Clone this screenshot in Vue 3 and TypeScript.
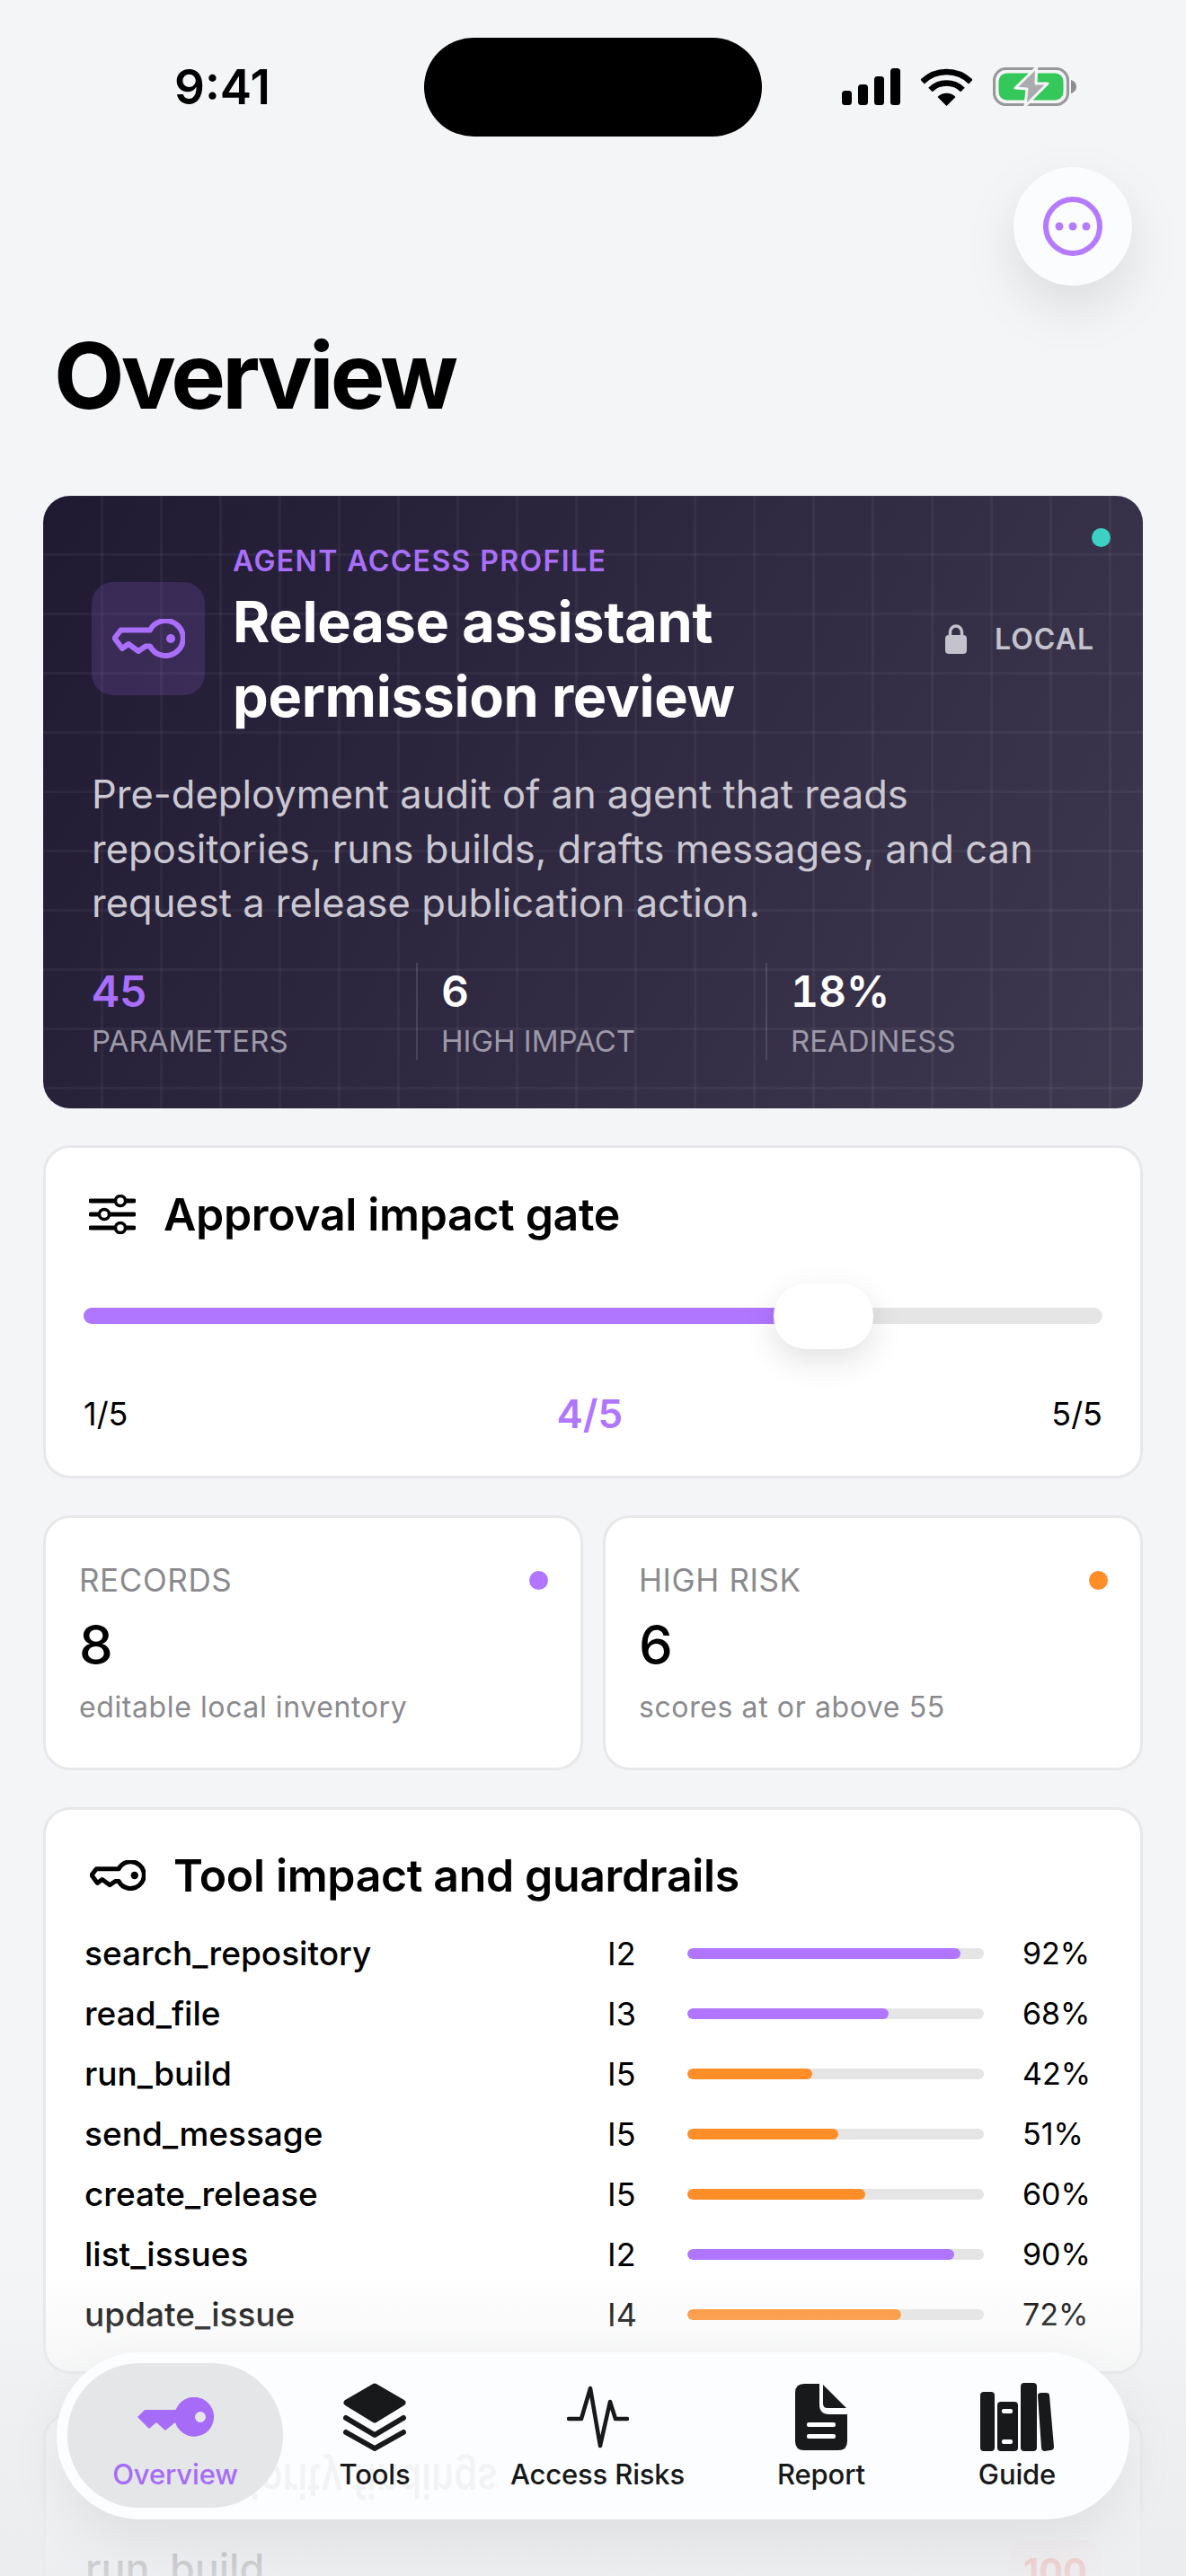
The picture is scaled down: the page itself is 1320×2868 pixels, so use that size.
<script setup lang="ts">
interface HeroStat {
  value: string;
  label: string;
  accent?: boolean;
}

interface ToolRow {
  name: string;
  impact: number;
  guard: number;
}

const heroStats: HeroStat[] = [
  { value: '45', label: 'PARAMETERS', accent: true },
  { value: '6', label: 'HIGH IMPACT' },
  { value: '18%', label: 'READINESS' },
];

const gatePercent = 72.6;

const summaries = [
  { label: 'RECORDS', value: '8', note: 'editable local inventory', tone: 'purple' },
  { label: 'HIGH RISK', value: '6', note: 'scores at or above 55', tone: 'orange' },
];

const tools: ToolRow[] = [
  { name: 'search_repository', impact: 2, guard: 92 },
  { name: 'read_file', impact: 3, guard: 68 },
  { name: 'run_build', impact: 5, guard: 42 },
  { name: 'send_message', impact: 5, guard: 51 },
  { name: 'create_release', impact: 5, guard: 60 },
  { name: 'list_issues', impact: 2, guard: 90 },
  { name: 'update_issue', impact: 4, guard: 72 },
];
</script>

<template>
  <div class="screen">
    <div class="status">
      <span class="time">9:41</span>
      <div class="status-icons">
        <svg width="65" height="41" viewBox="0 0 65 41" fill="#000">
          <rect x="0" y="25" width="11" height="16" rx="3.5" />
          <rect x="18" y="18" width="11" height="23" rx="3.5" />
          <rect x="36" y="9" width="11" height="32" rx="3.5" />
          <rect x="54" y="0" width="11" height="41" rx="3.5" />
        </svg>
        <svg width="57" height="42" viewBox="0 0 57 42">
          <path d="M1.6 15.1A38 38 0 0 1 55.4 15.1" fill="none" stroke="#000" stroke-width="6.5" />
          <path d="M10.5 24A25.5 25.5 0 0 1 46.5 24" fill="none" stroke="#000" stroke-width="6.5" />
          <path d="M28.5 42L18.5 32A14 14 0 0 1 38.5 32Z" fill="#000" />
        </svg>
        <svg width="93" height="43" viewBox="0 0 93 43">
          <rect x="1.5" y="1.5" width="82" height="40" rx="13" fill="none" stroke="#98989b" stroke-width="3.2" />
          <rect x="6.5" y="6.5" width="72" height="30" rx="9" fill="#34c759" />
          <path d="M87 14c3.500 1 6 4 6 7.500s-2.500 6.500-6 7.500Z" fill="#8e8e91" />
          <path d="M48.700 0L25 23L38 24L36 43L61 18L48 18Z" fill="#aaabad" stroke="#f4f5f7" stroke-width="3" stroke-linejoin="round" />
        </svg>
      </div>
    </div>
    <div class="island"></div>

    <div class="top-action">
      <button class="more-btn" type="button">
        <svg width="66" height="66" viewBox="0 0 66 66" fill="#b57bff">
          <circle cx="33" cy="33" r="30" fill="none" stroke="#b57bff" stroke-width="6" />
          <circle cx="18" cy="33" r="4.500" />
          <circle cx="33" cy="33" r="4.500" />
          <circle cx="48" cy="33" r="4.500" />
        </svg>
      </button>
    </div>

    <h1 class="page-title">Overview</h1>

    <main class="content">
      <section class="hero">
        <span class="hero-dot"></span>
        <div class="hero-head">
          <div class="hero-icon">
            <svg width="81" height="44" viewBox="0 0 81 44" fill="none" stroke="#a96ffa" stroke-width="6" stroke-linejoin="round">
              <path d="M42 12.500H9.500L2.500 21.500L11 33L18 28L29 36L37 30.500H42A19.500 19.500 0 1 0 42 12.500Z" />
              <circle cx="65" cy="22" r="5" fill="#a96ffa" stroke="none" />
            </svg>
          </div>
          <div class="hero-text">
            <div class="eyebrow">AGENT ACCESS PROFILE</div>
            <h2 class="hero-title">Release assistant<br />permission review</h2>
          </div>
          <div class="local">
            <svg width="24" height="33" viewBox="0 0 24 33" fill="#c4c2cc">
              <path d="M5.500 14V8.500a6.500 6.500 0 0 1 13 0V14" fill="none" stroke="#c4c2cc" stroke-width="3.500" />
              <rect x="0" y="12" width="24" height="21" rx="4" />
            </svg>
            <span>LOCAL</span>
          </div>
        </div>
        <p class="hero-desc">
          Pre-deployment audit of an agent that reads repositories, runs builds, drafts messages, and can request a release publication action.
        </p>
        <div class="hero-stats">
          <div v-for="stat in heroStats" :key="stat.label" class="hero-stat">
            <div class="hero-num" :class="{ accent: stat.accent }">{{ stat.value }}</div>
            <div class="hero-label">{{ stat.label }}</div>
          </div>
        </div>
      </section>

      <section class="card gate">
        <div class="card-head">
          <svg width="52" height="44" viewBox="0 0 52 44" fill="none" stroke="#000" stroke-linecap="round">
            <path d="M2 7H50M2 22H50M2 37H50" stroke-width="5" />
            <circle cx="35" cy="7" r="5.500" fill="#fff" stroke-width="3.500" />
            <circle cx="17" cy="22" r="5.500" fill="#fff" stroke-width="3.500" />
            <circle cx="35" cy="37" r="5.500" fill="#fff" stroke-width="3.500" />
          </svg>
          <h3>Approval impact gate</h3>
        </div>
        <div class="slider">
          <div class="track">
            <div class="track-fill" :style="{ width: gatePercent + '%' }"></div>
          </div>
          <div class="thumb" :style="{ left: gatePercent + '%' }"></div>
        </div>
        <div class="slider-labels">
          <span>1/5</span>
          <strong>4/5</strong>
          <span>5/5</span>
        </div>
      </section>

      <div class="summary-grid">
        <section v-for="item in summaries" :key="item.label" class="card summary">
          <div class="summary-top">
            <span class="summary-label">{{ item.label }}</span>
            <i class="summary-dot" :class="item.tone"></i>
          </div>
          <div class="summary-value">{{ item.value }}</div>
          <div class="summary-note">{{ item.note }}</div>
        </section>
      </div>

      <section class="card tools">
        <div class="card-head">
          <svg width="62" height="34" viewBox="0 0 81 44" fill="none" stroke="#000" stroke-width="6.500" stroke-linejoin="round">
            <path d="M42 12.500H9.500L2.500 21.500L11 33L18 28L29 36L37 30.500H42A19.500 19.500 0 1 0 42 12.500Z" />
            <circle cx="65" cy="22" r="5.500" fill="#000" stroke="none" />
          </svg>
          <h3>Tool impact and guardrails</h3>
        </div>
        <div class="tool-list">
          <div v-for="tool in tools" :key="tool.name" class="tool-row">
            <span class="tool-name">{{ tool.name }}</span>
            <span class="tool-impact">I{{ tool.impact }}</span>
            <div class="bar">
              <div class="bar-fill" :class="tool.impact >= 4 ? 'orange' : 'purple'" :style="{ width: tool.guard + '%' }"></div>
            </div>
            <span class="tool-pct">{{ tool.guard }}%</span>
          </div>
        </div>
      </section>

      <section class="card findings">
        <div class="card-head">
          <h3>Priority findings</h3>
        </div>
        <div class="finding-row">
          <span class="finding-name">run_build</span>
          <span class="finding-score">100</span>
        </div>
      </section>
    </main>

    <div class="fade"></div>

    <nav class="tabbar">
      <span class="lens-text">Priority findings</span>
      <div class="tab active">
        <div class="tab-icon">
          <svg width="85" height="44" viewBox="0 0 85 44" fill="#a66cf8">
            <path fill-rule="evenodd" d="M0 22L8 14H42.500A22 22 0 1 1 42 28L31 37L21 28L13 35ZM70 16a6 6 0 1 0 0 12a6 6 0 1 0 0-12Z" />
          </svg>
        </div>
        <span>Overview</span>
      </div>
      <div class="tab">
        <div class="tab-icon">
          <svg width="70" height="76" viewBox="0 0 70 76" fill="none" stroke="#17191a" stroke-linejoin="round" stroke-linecap="round">
            <path d="M35 4L66 22L35 41L4 22Z" fill="#17191a" stroke-width="7" />
            <path d="M3 39L35 58L67 39" stroke-width="6" />
            <path d="M3 55L35 73L67 55" stroke-width="6" />
          </svg>
        </div>
        <span>Tools</span>
      </div>
      <div class="tab">
        <div class="tab-icon">
          <svg width="69" height="70" viewBox="0 0 69 70" fill="none" stroke="#17191a" stroke-width="4.500" stroke-linecap="round" stroke-linejoin="round">
            <path d="M2 37H16L26 3L37 67L48 18L54 37H67" />
          </svg>
        </div>
        <span>Access Risks</span>
      </div>
      <div class="tab">
        <div class="tab-icon">
          <svg width="58" height="74" viewBox="0 0 58 74" fill="#17191a">
            <path d="M10 0H27V23Q27 34 38 34H58V64Q58 74 48 74H10Q0 74 0 64V10Q0 0 10 0Z" />
            <path d="M31 1L57 27H36Q31 27 31 22Z" />
            <rect x="13" y="43" width="32" height="5" rx="2" fill="#fdfeff" />
            <rect x="13" y="56" width="32" height="5" rx="2" fill="#fdfeff" />
          </svg>
        </div>
        <span>Report</span>
      </div>
      <div class="tab">
        <div class="tab-icon">
          <svg width="82" height="76" viewBox="0 0 82 76" fill="#17191a">
            <rect x="0" y="10" width="16" height="66" rx="4" />
            <rect x="19" y="21" width="23" height="55" rx="4" />
            <rect x="45" y="0" width="18" height="76" rx="4" />
            <path d="M64 14Q64 11 68 11L73 11Q77 11 77 14L82 71Q82 75 78 75L72 76Q68 76 68 72Z" />
            <rect x="24" y="29" width="12" height="5" rx="2" fill="#fdfeff" />
            <rect x="24" y="63" width="12" height="5" rx="2" fill="#fdfeff" />
          </svg>
        </div>
        <span>Guide</span>
      </div>
    </nav>
  </div>
</template>

<style scoped>
.screen {
  position: relative;
  width: 1320px;
  height: 2868px;
  overflow: hidden;
  background: #f4f5f7;
  font-family: Inter, "Liberation Sans", sans-serif;
  color: #000;
}

.status {
  display: flex;
  justify-content: space-between;
  align-items: flex-start;
  height: 186px;
  padding: 75px 122px 0 194px;
  box-sizing: border-box;
}

.time {
  font-size: 53px;
  line-height: 44px;
  font-weight: 600;
}

.status-icons {
  display: flex;
  align-items: center;
  gap: 23px;
}

.island {
  position: absolute;
  left: 472px;
  top: 42px;
  width: 376px;
  height: 110px;
  border-radius: 55px;
  background: #000;
}

.top-action {
  display: flex;
  justify-content: flex-end;
  padding-right: 60px;
}

.more-btn {
  display: flex;
  align-items: center;
  justify-content: center;
  width: 132px;
  height: 132px;
  padding: 0;
  border: 0;
  border-radius: 50%;
  background: #fbfcfe;
  box-shadow: 0 24px 60px rgba(0, 0, 0, 0.1);
}

.page-title {
  margin: 40px 0 74px 60px;
  font-size: 102px;
  line-height: 120px;
  font-weight: 700;
  letter-spacing: -3.8px;
}

.content {
  display: flex;
  flex-direction: column;
  gap: 41px;
  padding: 0 48px;
}

.hero {
  position: relative;
  height: 682px;
  box-sizing: border-box;
  padding: 53px 54px 0 54px;
  border-radius: 30px;
  color: #fff;
  background-color: #2d2740;
  background-image:
    linear-gradient(to right, rgba(255, 255, 255, 0.045) 3px, transparent 3px),
    linear-gradient(to bottom, rgba(255, 255, 255, 0.045) 3px, transparent 3px),
    linear-gradient(120deg, #1f1932 0%, #3f3950 100%);
  background-size: 66px 66px, 66px 66px, 100% 100%;
  background-position: 64px 0, 0 64px, 0 0;
}

.hero-dot {
  position: absolute;
  top: 36px;
  right: 36px;
  width: 21px;
  height: 21px;
  border-radius: 50%;
  background: #3dd1c4;
}

.hero-head {
  display: flex;
  align-items: center;
}

.hero-icon {
  display: flex;
  align-items: center;
  justify-content: center;
  flex: none;
  width: 126px;
  height: 126px;
  border-radius: 24px;
  background: rgba(170, 110, 250, 0.17);
}

.hero-text {
  flex: 1;
  margin-left: 31px;
}

.eyebrow {
  font-size: 32px;
  line-height: 40px;
  font-weight: 600;
  letter-spacing: 1.4px;
  color: #a96ffa;
}

.hero-title {
  margin: 6px 0 0;
  font-size: 63px;
  line-height: 83px;
  font-weight: 700;
  letter-spacing: -0.3px;
}

.local {
  display: flex;
  align-items: center;
  gap: 31px;
  font-size: 32px;
  font-weight: 600;
  letter-spacing: 1px;
  color: #c4c2cc;
}

.hero-desc {
  margin: 37px 0 0;
  width: 1080px;
  font-size: 43.5px;
  line-height: 60.5px;
  color: #cbc8d2;
}

.hero-stats {
  display: grid;
  grid-template-columns: 361px 389px 1fr;
  margin-top: 36px;
}

.hero-stat {
  height: 108px;
  padding: 4px 0 0 26px;
  box-sizing: border-box;
  border-left: 2px solid rgba(255, 255, 255, 0.13);
}

.hero-stat:first-child {
  padding-left: 0;
  border-left: 0;
}

.hero-num {
  font-size: 48px;
  line-height: 56px;
  font-weight: 600;
  font-variant-numeric: tabular-nums;
}

.hero-num.accent {
  color: #a96ffa;
}

.hero-label {
  margin-top: 7px;
  font-size: 33px;
  line-height: 40px;
  color: #9c99a8;
}

.card {
  box-sizing: border-box;
  border: 3px solid #e8e8ea;
  border-radius: 30px;
  background: #fff;
}

.card-head {
  display: flex;
  align-items: center;
  gap: 31px;
  padding-left: 6px;
}

.card-head h3 {
  margin: 0;
  font-size: 50px;
  line-height: 60px;
  font-weight: 600;
  letter-spacing: -0.35px;
}

.gate {
  padding: 44px 42px 42px;
}

.slider {
  position: relative;
  height: 73px;
  margin-top: 47px;
}

.track {
  position: absolute;
  top: 27px;
  left: 0;
  right: 0;
  height: 18px;
  border-radius: 9px;
  background: #e5e5e5;
  overflow: hidden;
}

.track-fill {
  height: 100%;
  background: #b076ff;
}

.thumb {
  position: absolute;
  top: 0;
  width: 111px;
  height: 73px;
  margin-left: -55px;
  border-radius: 36px;
  background: #fff;
  box-shadow: 0 12px 36px rgba(0, 0, 0, 0.12);
}

.slider-labels {
  display: flex;
  align-items: center;
  justify-content: space-between;
  height: 54px;
  margin-top: 45px;
  font-size: 36px;
}

.slider-labels strong {
  font-size: 44px;
  font-weight: 600;
  color: #b076ff;
}

.summary-grid {
  display: grid;
  grid-template-columns: 601px 601px;
  gap: 22px;
}

.summary {
  height: 284px;
  padding: 48px 36px 0 37px;
}

.summary-top {
  display: flex;
  align-items: center;
  justify-content: space-between;
}

.summary-label {
  font-size: 35px;
  line-height: 42px;
  letter-spacing: 0.6px;
  color: #8a8a8e;
}

.summary-dot {
  width: 21px;
  height: 21px;
  border-radius: 50%;
}

.summary-dot.purple,
.bar-fill.purple {
  background: #b076ff;
}

.summary-dot.orange,
.bar-fill.orange {
  background: #ff8d28;
}

.summary-value {
  margin-top: 16px;
  font-size: 60px;
  line-height: 70px;
  font-weight: 500;
}

.summary-note {
  margin-top: 15px;
  font-size: 32px;
  line-height: 40px;
  letter-spacing: 0.6px;
  color: #8a8a8e;
}

.tools {
  margin-bottom: 2px;
  padding: 43px 40px 30px 43px;
}

.tool-list {
  margin-top: 23px;
}

.tool-row {
  display: grid;
  grid-template-columns: 582px 89px 330px 1fr;
  align-items: center;
  height: 67px;
  font-size: 36px;
}

.tool-name {
  font-size: 37px;
  font-weight: 500;
}

.bar {
  height: 12px;
  border-radius: 6px;
  background: #e5e5e5;
  overflow: hidden;
}

.bar-fill {
  height: 100%;
  border-radius: 6px;
}

.tool-pct {
  padding-left: 43px;
  font-size: 34px;
}

.findings {
  height: 300px;
  padding: 46px 43px 0 44px;
}

.finding-row {
  display: flex;
  align-items: flex-start;
  justify-content: space-between;
  margin-top: 33px;
}

.finding-name {
  padding-top: 5px;
  font-size: 45px;
  line-height: 54px;
  font-weight: 500;
  color: #1c1c1e;
}

.finding-score {
  width: 103px;
  height: 80px;
  border-radius: 18px;
  background: rgba(255, 59, 48, 0.08);
  font-size: 40px;
  font-weight: 700;
  line-height: 70px;
  text-align: center;
  color: #ff3b30;
}

.fade {
  position: absolute;
  left: 0;
  right: 0;
  bottom: 0;
  height: 340px;
  background: linear-gradient(to bottom, rgba(235, 236, 238, 0) 0%, rgba(235, 236, 238, 0.55) 40%, rgba(235, 236, 238, 0.88) 100%);
}

.tabbar {
  position: absolute;
  left: 63px;
  top: 2619px;
  display: grid;
  grid-template-columns: 240px 204px 292px 206px 230px;
  width: 1194px;
  height: 186px;
  box-sizing: border-box;
  padding: 12px 10px 13px 12px;
  border-radius: 93px;
  background: #fcfdfe;
  box-shadow: 0 24px 60px rgba(0, 0, 0, 0.07);
}

.lens-text {
  position: absolute;
  left: 173px;
  top: 118px;
  font-size: 41px;
  line-height: 50px;
  font-weight: 600;
  white-space: nowrap;
  opacity: 0.035;
  filter: blur(0.6px);
  transform: scaleY(-1.3);
}

.tab {
  position: relative;
  display: flex;
  flex-direction: column;
  align-items: center;
  padding-top: 21px;
  font-size: 31px;
  line-height: 38px;
  font-weight: 500;
  letter-spacing: -0.15px;
  color: #17191a;
}

.tab.active {
  border-radius: 80px;
  background: #e4e6e8;
  color: #a66cf8;
}

.tab-icon {
  display: flex;
  align-items: center;
  justify-content: center;
  height: 78px;
  margin-bottom: 6px;
}
</style>

<style>
html,
body {
  background: #f4f5f7;
}
</style>
